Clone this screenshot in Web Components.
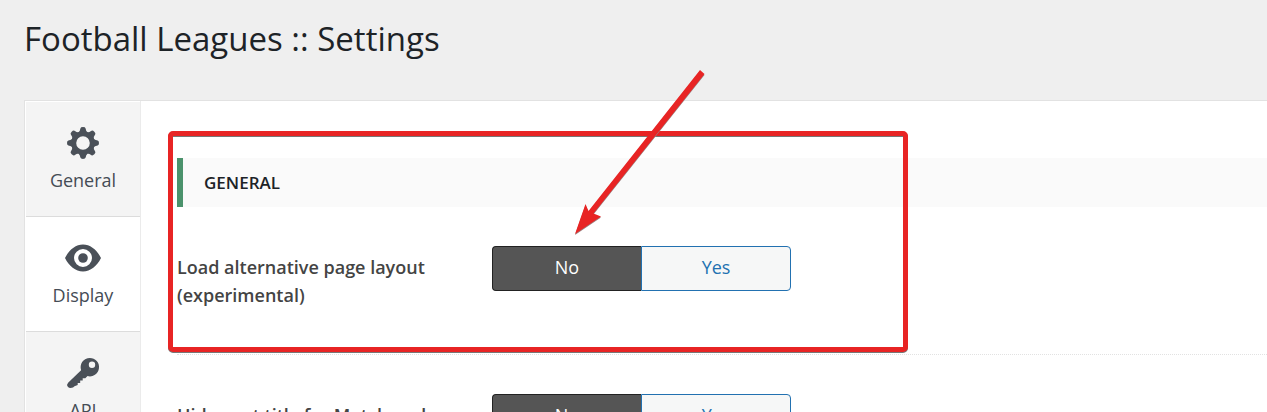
<!DOCTYPE html>
<html lang="en">
<head>
<meta charset="utf-8">
<meta name="viewport" content="width=device-width, initial-scale=1">
<title>Football Leagues :: Settings</title>
<style>
  body{margin:0;background:#efefef;font-family:"Segoe UI","Open Sans","Noto Sans",sans-serif;color:#1d2327}
</style>
</head>
<body>
<fl-settings-page heading="Football Leagues :: Settings">
  <fl-tab slot="tabs" icon="gear">General</fl-tab>
  <fl-tab slot="tabs" icon="eye" active>Display</fl-tab>
  <fl-tab slot="tabs" icon="key">API</fl-tab>
  <fl-highlight>
    <fl-section-title>GENERAL</fl-section-title>
    <fl-switch-row name="alt_layout" label="Load alternative page layout (experimental)"></fl-switch-row>
  </fl-highlight>
  <fl-switch-row name="hide_title" label="Hide post title for Match and"></fl-switch-row>
</fl-settings-page>

<script>
(function () {
  const ICONS = {
    gear: `<g transform="translate(18 18)">
      <path fill-rule="evenodd" d="M0-11.8A11.8 11.8 0 1 1 0 11.8A11.8 11.8 0 1 1 0-11.8ZM0-6.8A6.8 6.8 0 1 0 0 6.8A6.8 6.8 0 1 0 0-6.8Z"/>
      ${[0, 45, 90, 135, 180, 225, 270, 315].map(a => `<path transform="rotate(${a})" d="M-4.6-10.4Q-3-11.6-2.6-14.6Q-2.4-16 0-16T2.6-14.6Q3-11.6 4.6-10.4Z"/>`).join('')}
    </g>`,
    eye: `<path fill-rule="evenodd" d="M0 18C4 10 10.500 4.500 18 4.500S32 10 36 18C32 26 25.500 31.500 18 31.500S4 26 0 18ZM18 9A9 9 0 1 0 18 27A9 9 0 1 0 18 9Z"/><circle cx="18" cy="18" r="4.800"/>`,
    key: `<path fill-rule="evenodd" d="M24.800 3A9.200 9.200 0 1 1 22.500 21.100L20.300 23.300H17.700V25.600H15.200V28H12.700V30L9.500 31.200L8 32.600Q4.500 33.800 2.800 31.800Q1.300 29.700 3.100 27.700L16.100 15.200A9.200 9.200 0 0 1 24.800 3ZM27 6.500A3.200 3.200 0 1 0 27 12.900A3.200 3.200 0 1 0 27 6.500Z"/>`
  };

  class FLSettingsPage extends HTMLElement {
    connectedCallback() {
      const s = this.attachShadow({ mode: 'open' });
      s.innerHTML = `
        <style>
          *{box-sizing:border-box}
          :host{display:flex;flex-direction:column;height:100vh;padding-left:24px;overflow:hidden}
          h1{flex:none;margin:0;padding:15px 0 37px;font-size:33px;line-height:48px;font-weight:400}
          .wrap{flex:none;display:flex;background:#fff;border:solid #e2e2e2;border-width:1px 0 0 1px}
          nav{flex:none;width:116px;padding:1px 0 0 1px;border-right:1px solid #ebebeb;background:#fff}
          main{flex:1;min-width:0;padding:57px 0 0 36px}
        </style>
        <h1>${this.getAttribute('heading')}</h1>
        <div class="wrap">
          <nav><slot name="tabs"></slot></nav>
          <main><slot></slot></main>
        </div>`;
    }
  }

  class FLTab extends HTMLElement {
    connectedCallback() {
      const s = this.attachShadow({ mode: 'open' });
      s.innerHTML = `
        <style>
          :host{display:block}
          a{display:flex;flex-direction:column;align-items:center;gap:7px;padding:23px 0 24px;border-bottom:1px solid #dcdcdc;background:#f4f4f4;color:#454c55;font-size:18px;line-height:24px;text-decoration:none}
          :host([active]) a{background:#fff}
          svg{width:36px;height:36px;fill:#4a5058}
        </style>
        <a href="#${this.getAttribute('icon')}"><svg viewBox="0 0 36 36" aria-hidden="true">${ICONS[this.getAttribute('icon')]}</svg><span><slot></slot></span></a>`;
    }
  }

  class FLSectionTitle extends HTMLElement {
    connectedCallback() {
      const s = this.attachShadow({ mode: 'open' });
      s.innerHTML = `
        <style>
          :host{display:block}
          h2{margin:0;padding:12px 21px;border-left:6px solid #4b926c;background:#fafafa;font-size:17px;line-height:25px;font-weight:600}
        </style>
        <h2><slot></slot></h2>`;
    }
  }

  class FLSwitchRow extends HTMLElement {
    connectedCallback() {
      const name = this.getAttribute('name');
      const s = this.attachShadow({ mode: 'open' });
      s.innerHTML = `
        <style>
          *{box-sizing:border-box}
          :host{display:block;border-bottom:1px dotted #e2e2e2}
          .row{display:flex;align-items:flex-start;padding:39px 0 45px}
          .label{flex:none;width:270px;margin-right:45px;padding-top:7px;font-size:18px;line-height:28px;font-weight:600;color:#444}
          .switch{display:flex;width:299px}
          label{flex:1;height:45px;border:1px solid #2271b1;background:#f6f7f7;color:#2271b1;font-size:18px;line-height:41px;text-align:center;cursor:pointer}
          label:first-child{border-right:0;border-radius:4px 0 0 4px}
          label:last-child{border-radius:0 4px 4px 0}
          label:has(:checked){border-color:#222;background:#555;color:#fff}
          input{position:absolute;opacity:0;width:1px;height:1px;margin:0}
        </style>
        <div class="row">
          <div class="label" id="t">${this.getAttribute('label')}</div>
          <div class="switch" role="radiogroup" aria-labelledby="t">
            <label><input type="radio" name="${name}" value="no" checked>No</label>
            <label><input type="radio" name="${name}" value="yes">Yes</label>
          </div>
        </div>`;
    }
  }

  // Red frame and arrow laid over the settings group
  class FLHighlight extends HTMLElement {
    connectedCallback() {
      const s = this.attachShadow({ mode: 'open' });
      s.innerHTML = `
        <style>
          :host{display:block;position:relative}
          .frame,svg{position:absolute;pointer-events:none}
          .frame{box-sizing:border-box;top:-27px;left:-9px;width:740px;height:221px;border:5px solid #e82424;border-radius:5px;filter:drop-shadow(0 1px 0 #777)}
          svg{top:-98px;left:390px;width:150px;height:180px;fill:#e82424;filter:drop-shadow(0 1px 0 #9a8080)}
        </style>
        <slot></slot>
        <div class="frame"></div>
        <svg viewBox="0 0 150 180" aria-hidden="true"><path d="M133 10L137.500 14L26.500 153.500L34 156.500L8 174L18.500 144L21.500 151Z"/></svg>`;
    }
  }

  customElements.define('fl-settings-page', FLSettingsPage);
  customElements.define('fl-tab', FLTab);
  customElements.define('fl-section-title', FLSectionTitle);
  customElements.define('fl-switch-row', FLSwitchRow);
  customElements.define('fl-highlight', FLHighlight);
})();
</script>
</body>
</html>
